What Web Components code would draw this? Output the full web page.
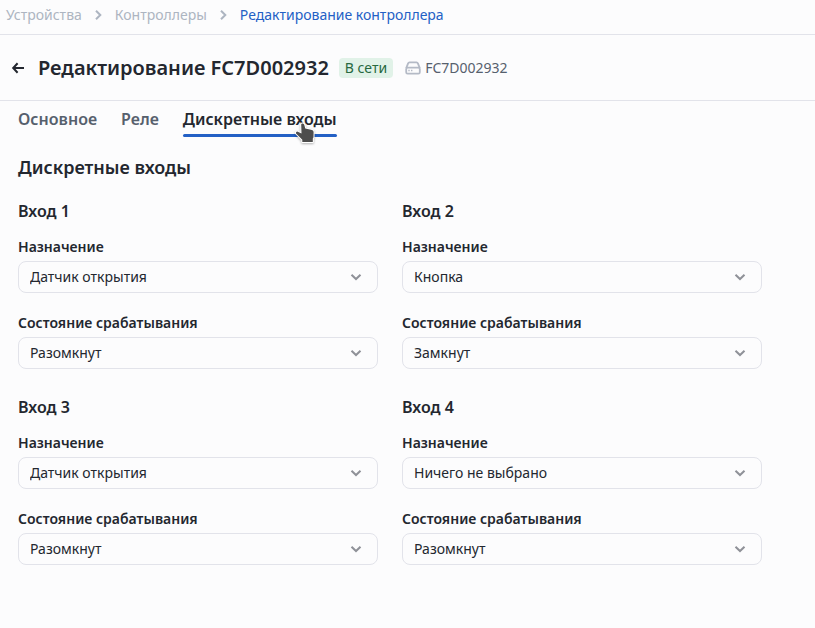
<!DOCTYPE html>
<html lang="ru">
<head>
<meta charset="utf-8">
<meta name="viewport" content="width=device-width, initial-scale=1">
<title>Редактирование контроллера</title>
<style>
  body {
    margin: 0;
    background: #fcfcfd;
    color: #23272f;
    font-family: "Noto Sans", "Open Sans", sans-serif;
    font-size: 14px;
    line-height: 20px;
    --line: #e2e3ea;
    --accent: #2360c5;
    --muted: #adb5c1;
    --secondary: #56606d;
  }
</style>
</head>
<body>
<controller-page>
  <bread-crumbs slot="crumbs">
    <bread-crumb href="#devices">Устройства</bread-crumb>
    <bread-crumb href="#controllers">Контроллеры</bread-crumb>
    <bread-crumb href="#edit" current>Редактирование контроллера</bread-crumb>
  </bread-crumbs>
  <page-header slot="header" serial="FC7D002932">
    Редактирование FC7D002932
    <status-badge slot="status">В сети</status-badge>
  </page-header>
  <tab-bar slot="tabs">
    <tab-item>Основное</tab-item>
    <tab-item>Реле</tab-item>
    <tab-item selected>Дискретные входы<hand-pointer slot="pointer"></hand-pointer></tab-item>
  </tab-bar>
  <input-section heading="Дискретные входы">
    <input-card heading="Вход 1">
      <select-field label="Назначение" value="Датчик открытия" options="Ничего не выбрано|Кнопка|Датчик открытия"></select-field>
      <select-field label="Состояние срабатывания" value="Разомкнут" options="Замкнут|Разомкнут"></select-field>
    </input-card>
    <input-card heading="Вход 2">
      <select-field label="Назначение" value="Кнопка" options="Ничего не выбрано|Кнопка|Датчик открытия"></select-field>
      <select-field label="Состояние срабатывания" value="Замкнут" options="Замкнут|Разомкнут"></select-field>
    </input-card>
    <input-card heading="Вход 3">
      <select-field label="Назначение" value="Датчик открытия" options="Ничего не выбрано|Кнопка|Датчик открытия"></select-field>
      <select-field label="Состояние срабатывания" value="Разомкнут" options="Замкнут|Разомкнут"></select-field>
    </input-card>
    <input-card heading="Вход 4">
      <select-field label="Назначение" value="Ничего не выбрано" options="Ничего не выбрано|Кнопка|Датчик открытия"></select-field>
      <select-field label="Состояние срабатывания" value="Разомкнут" options="Замкнут|Разомкнут"></select-field>
    </input-card>
  </input-section>
</controller-page>

<script>
/** Page shell: breadcrumbs, header, tabs, then the content */
class ControllerPage extends HTMLElement {
  constructor() {
    super();
    this.attachShadow({ mode: 'open' });
  }

  connectedCallback() {
    this.shadowRoot.innerHTML = `
      <style>
        :host { display: block; }
        .body { padding: 0 18px 24px; }
      </style>
      <slot name="crumbs"></slot>
      <main>
        <slot name="header"></slot>
        <div class="body">
          <slot name="tabs"></slot>
          <slot></slot>
        </div>
      </main>
    `;
  }
}

class BreadCrumbs extends HTMLElement {
  constructor() {
    super();
    this.attachShadow({ mode: 'open' });
  }

  connectedCallback() {
    this.shadowRoot.innerHTML = `
      <style>
        :host {
          display: block;
          border-bottom: 1px solid var(--line);
        }
        nav {
          display: flex;
          padding: 5px 6px 9px;
        }
      </style>
      <nav aria-label="Навигация"><slot></slot></nav>
    `;
  }
}

/**
 * @attr {string} href - Link target
 * @attr {boolean} current - Last crumb, drawn without a chevron
 */
class BreadCrumb extends HTMLElement {
  constructor() {
    super();
    this.attachShadow({ mode: 'open' });
  }

  connectedCallback() {
    const current = this.hasAttribute('current');
    this.shadowRoot.innerHTML = `
      <style>
        :host {
          display: flex;
          align-items: center;
        }
        a {
          color: var(--muted);
          text-decoration: none;
        }
        :host([current]) a { color: var(--accent); }
        svg {
          margin: 0 8px 0 9px;
          color: var(--muted);
        }
      </style>
      <a href="${this.getAttribute('href')}" ${current ? 'aria-current="page"' : ''}><slot></slot></a>
      ${current ? '' : `
        <svg width="16" height="16" viewBox="0 0 16 16" fill="none" stroke="currentColor" stroke-width="2" aria-hidden="true">
          <path d="M5 3.8l4.3 4.2L5 12.2"/>
        </svg>`}
    `;
  }
}

/** @attr {string} serial - Serial number next to the device icon */
class PageHeader extends HTMLElement {
  constructor() {
    super();
    this.attachShadow({ mode: 'open' });
  }

  connectedCallback() {
    this.shadowRoot.innerHTML = `
      <style>
        :host {
          display: block;
          border-bottom: 1px solid var(--line);
        }
        header {
          display: flex;
          align-items: center;
          padding: 19px 10px 18px;
        }
        button {
          display: flex;
          margin: 0 12px 0 0;
          padding: 0;
          border: 0;
          background: none;
          color: inherit;
          cursor: pointer;
        }
        h1 {
          margin: 0 10px 0 0;
          font-size: 20px;
          line-height: 28px;
          font-weight: 600;
        }
        .device {
          display: flex;
          align-items: center;
          gap: 4px;
          margin-left: 12px;
          color: var(--secondary);
        }
        .device svg { color: #b4bac6; }
      </style>
      <header>
        <button type="button" aria-label="Назад">
          <svg width="16" height="16" viewBox="0 0 16 16" fill="none" stroke="currentColor" stroke-width="2">
            <path d="M7.6 3.2L3.2 8l4.4 4.8M3.2 8H14"/>
          </svg>
        </button>
        <h1><slot></slot></h1>
        <slot name="status"></slot>
        <div class="device">
          <svg width="16" height="16" viewBox="0 0 16 16" fill="none" stroke="currentColor" stroke-width="1.8" stroke-linejoin="round" aria-hidden="true">
            <path d="M1.2 8.2L3.1 3.4Q3.5 2.4 4.5 2.4h7Q12.5 2.4 12.9 3.4L14.8 8.2"/>
            <rect x="1.2" y="7.6" width="13.6" height="6" rx="1.4"/>
            <path d="M3.3 10.6h1.4M6 10.6h1.4" stroke-width="1.5"/>
          </svg>
          <span>${this.getAttribute('serial')}</span>
        </div>
      </header>
    `;
  }
}

class StatusBadge extends HTMLElement {
  constructor() {
    super();
    this.attachShadow({ mode: 'open' });
  }

  connectedCallback() {
    this.shadowRoot.innerHTML = `
      <style>
        :host {
          display: block;
          padding: 0 6px;
          border-radius: 4px;
          background: #e1f2e8;
          color: #27693f;
        }
      </style>
      <slot></slot>
    `;
  }
}

class TabBar extends HTMLElement {
  constructor() {
    super();
    this.attachShadow({ mode: 'open' });
  }

  connectedCallback() {
    this.setAttribute('role', 'tablist');
    this.shadowRoot.innerHTML = `
      <style>
        :host {
          display: flex;
          gap: 24px;
        }
      </style>
      <slot></slot>
    `;
  }
}

/** @attr {boolean} selected - Draws the underline */
class TabItem extends HTMLElement {
  constructor() {
    super();
    this.attachShadow({ mode: 'open' });
  }

  connectedCallback() {
    this.shadowRoot.innerHTML = `
      <style>
        :host {
          display: block;
          position: relative;
        }
        button {
          display: block;
          position: relative;
          margin: 0;
          padding: 6px 0;
          border: 0;
          background: none;
          color: var(--secondary);
          font: inherit;
          font-size: 16px;
          line-height: 24px;
          font-weight: 600;
          cursor: pointer;
        }
        :host([selected]) button { color: #23272f; }
        :host([selected]) button::after {
          content: "";
          position: absolute;
          left: 0;
          right: 0;
          bottom: 0;
          height: 3px;
          border-radius: 2px;
          background: var(--accent);
        }
      </style>
      <button type="button" role="tab" aria-selected="${this.hasAttribute('selected')}"><slot></slot></button>
      <slot name="pointer"></slot>
    `;
  }
}

class HandPointer extends HTMLElement {
  constructor() {
    super();
    this.attachShadow({ mode: 'open' });
  }

  connectedCallback() {
    this.shadowRoot.innerHTML = `
      <style>
        :host {
          position: absolute;
          right: 20px;
          top: 20px;
          pointer-events: none;
        }
        svg {
          display: block;
          filter: drop-shadow(0 1px 1px rgba(0, 0, 0, 0.3));
        }
      </style>
      <svg width="24" height="24" viewBox="0 0 24 24" aria-hidden="true">
        <path d="M9 2.5Q11 2 11.3 4L12.3 7.4L19 9Q20.6 9.4 20.6 11L20.5 16.2L19.8 17.6V21H9.3V18.8L3 12.4Q2.6 10.8 4.3 10.6L8.5 12.4L8.2 3.6Q8.2 2.8 9 2.5Z"
          fill="#4d4d4d" stroke="#fff" stroke-width="2" stroke-linejoin="round" paint-order="stroke"/>
      </svg>
    `;
  }
}

/** @attr {string} heading - Section title */
class InputSection extends HTMLElement {
  constructor() {
    super();
    this.attachShadow({ mode: 'open' });
  }

  connectedCallback() {
    this.shadowRoot.innerHTML = `
      <style>
        :host { display: block; }
        h2 {
          margin: 18px 0 20px;
          font-size: 18px;
          line-height: 24px;
          font-weight: 600;
        }
        .grid {
          display: grid;
          grid-template-columns: repeat(2, minmax(0, 360px));
          gap: 26px 24px;
        }
      </style>
      <section>
        <h2>${this.getAttribute('heading')}</h2>
        <div class="grid"><slot></slot></div>
      </section>
    `;
  }
}

/** @attr {string} heading - Name of the input */
class InputCard extends HTMLElement {
  constructor() {
    super();
    this.attachShadow({ mode: 'open' });
  }

  connectedCallback() {
    this.shadowRoot.innerHTML = `
      <style>
        :host { display: block; }
        h3 {
          margin: 0 0 14px;
          font-size: 16px;
          line-height: 24px;
          font-weight: 600;
        }
        .fields {
          display: grid;
          gap: 20px;
        }
      </style>
      <h3>${this.getAttribute('heading')}</h3>
      <div class="fields"><slot></slot></div>
    `;
  }
}

/**
 * Labelled drop-down
 *
 * @attr {string} label - Label text
 * @attr {string} value - Selected option
 * @attr {string} options - Options, separated by |
 */
class SelectField extends HTMLElement {
  constructor() {
    super();
    this.attachShadow({ mode: 'open' });
  }

  get options() {
    return (this.getAttribute('options') || '').split('|');
  }

  connectedCallback() {
    const value = this.getAttribute('value');
    const options = this.options
      .map(o => `<option ${o === value ? 'selected' : ''}>${o}</option>`)
      .join('');

    this.shadowRoot.innerHTML = `
      <style>
        :host { display: block; }
        label {
          display: block;
          margin-bottom: 4px;
          font-weight: 600;
        }
        .control {
          display: grid;
          align-items: center;
        }
        select, svg { grid-area: 1 / 1; }
        select {
          appearance: none;
          box-sizing: border-box;
          width: 100%;
          height: 32px;
          margin: 0;
          padding: 0 36px 0 11px;
          border: 1px solid var(--line);
          border-radius: 8px;
          background: #fcfcfd;
          color: inherit;
          font: inherit;
        }
        svg {
          justify-self: end;
          margin-right: 14px;
          color: #8f9198;
          pointer-events: none;
        }
      </style>
      <label for="select">${this.getAttribute('label')}</label>
      <div class="control">
        <select id="select">${options}</select>
        <svg width="16" height="16" viewBox="0 0 16 16" fill="none" stroke="currentColor" stroke-width="2" aria-hidden="true">
          <path d="M3.5 5.7L8 10l4.5-4.3"/>
        </svg>
      </div>
    `;
  }
}

customElements.define('controller-page', ControllerPage);
customElements.define('bread-crumbs', BreadCrumbs);
customElements.define('bread-crumb', BreadCrumb);
customElements.define('page-header', PageHeader);
customElements.define('status-badge', StatusBadge);
customElements.define('tab-bar', TabBar);
customElements.define('tab-item', TabItem);
customElements.define('hand-pointer', HandPointer);
customElements.define('input-section', InputSection);
customElements.define('input-card', InputCard);
customElements.define('select-field', SelectField);
</script>
</body>
</html>
